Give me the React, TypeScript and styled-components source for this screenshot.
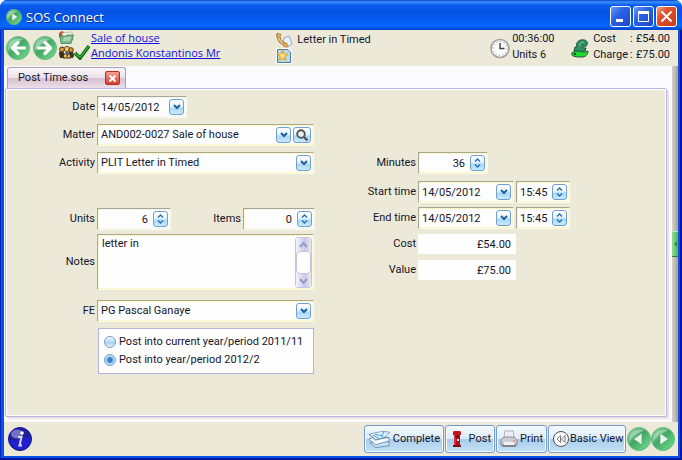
import React from 'react';
import styled, { createGlobalStyle, css } from 'styled-components';

const GlobalStyle = createGlobalStyle`
  * { box-sizing: border-box; }
  body { margin: 0; background: #ffffff; }
  button, input, select, textarea { font: inherit; color: inherit; margin: 0; }
  svg { display: block; flex: none; }
`;

const sand = '#ece9d8';
const face = css`
  background: linear-gradient(#ffffff 0%, #e4f2fd 45%, #a9d8f8 60%, #c9ebfd 100%);
  border: 1px solid #6f9fd0;
  border-radius: 3px;
`;

const Window = styled.div`
  display: flex;
  flex-direction: column;
  min-height: 100vh;
  padding: 0 2px 2px 3px;
  font: 11px/14px Roboto, 'Liberation Sans', sans-serif;
  color: #15152a;
  border: 2px solid #00189c;
  border-top: 0;
  border-left: 1px solid #0024c0;
  border-radius: 8px 8px 0 0;
  background: #0850e8;
`;

const TitleBar = styled.header`
  display: flex;
  align-items: center;
  height: 30px;
  margin: 0 -4px;
  padding: 3px 5px 0 6px;
  gap: 4px;
  border-radius: 7px 7px 0 0;
  background: linear-gradient(#0844c8 0, #3c92ff 2px, #0a5cf0 5px, #0453e4 12px, #0558ec 18px, #0668ff 26px, #0142c8 30px);
`;

const Title = styled.h1`
  flex: 1;
  margin: 0;
  font: 500 13px/18px 'Open Sans', 'Noto Sans', sans-serif;
  color: #ffffff;
  text-shadow: 1px 1px 0 #0a2a90;
`;

const CaptionButtons = styled.div`
  display: flex;
  gap: 2px;
`;

const CaptionButton = styled.button<{ $close?: boolean }>`
  display: grid;
  place-items: center;
  width: 21px;
  height: 21px;
  padding: 0;
  border: 1px solid #ffffff;
  border-radius: 3px;
  background: ${(p) =>
    p.$close
      ? 'linear-gradient(135deg, #f0a080, #e2502c 35%, #c83c14)'
      : 'linear-gradient(135deg, #6c98f4, #2a62e4 40%, #1c48cc)'};
`;

const Toolbar = styled.div`
  display: flex;
  align-items: center;
  height: 36px;
  padding: 0 8px 0 2px;
  background: ${sand};
`;

const RoundButton = styled.button`
  width: 24px;
  height: 24px;
  padding: 0;
  border: 0;
  border-radius: 50%;
  background: none;
`;

const NavButtons = styled.div`
  display: flex;
  gap: 3px;
`;

const Links = styled.div`
  display: grid;
  grid-template-columns: 33px auto;
  align-items: center;
  align-self: flex-start;
  margin-left: 1px;
  font: 11px/15px 'Open Sans', 'Noto Sans', sans-serif;
  white-space: nowrap;
`;

const Link = styled.a`
  color: #1111e0;
  text-decoration: underline;
`;

const Task = styled.div`
  flex: 1;
  display: grid;
  grid-template-columns: 16px auto;
  justify-content: start;
  column-gap: 5px;
  align-items: center;
  margin-left: 56px;
`;

const Figures = styled.div`
  display: grid;
  grid-template-columns: auto auto;
  gap: 2px 2px;
  align-items: center;
  width: 81px;
  justify-content: start;
`;

const Totals = styled.div`
  display: flex;
  align-items: center;
  gap: 4px;
`;

const TotalList = styled.dl`
  display: grid;
  grid-template-columns: auto 4px auto;
  gap: 2px 2px;
  margin: 0;
  padding-bottom: 2px;
`;

const Term = styled.dt``;
const Amount = styled.dd`
  margin: 0;
`;

const Lines = styled.div`
  display: grid;
  row-gap: 2px;
  padding-bottom: 2px;
`;

const Body = styled.div`
  flex: 1;
  display: flex;
  background: #fbfbfd;
`;

const Workspace = styled.main`
  flex: 1;
  display: flex;
  flex-direction: column;
  padding: 1px 5px 5px 1px;
`;

const Tab = styled.div`
  display: flex;
  align-items: center;
  justify-content: space-between;
  width: 119px;
  height: 21px;
  margin-left: 2px;
  padding: 0 5px 0 10px;
  border: 1px solid #b49cb4;
  border-bottom: 0;
  border-radius: 3px 3px 0 0;
  background: linear-gradient(#faf6fa 0, #ece0ea 48%, #d8c0d0 52%, #ecdfe8 100%);
`;

const TabLabel = styled.button`
  padding: 0;
  border: 0;
  background: none;
`;

const CloseTab = styled.button`
  display: grid;
  place-items: center;
  width: 15px;
  height: 14px;
  padding: 0;
  border: 1px solid #b03028;
  border-radius: 2px;
  background: linear-gradient(#f4a090, #d84030);
`;

const Panel = styled.form`
  flex: 1;
  display: flex;
  align-items: flex-start;
  padding-top: 7px;
  border: 1px solid #b4b8e0;
  border-radius: 2px;
  outline: 1px solid #ffffff;
  outline-offset: -2px;
  box-shadow: 2px 2px 1px #f0dce4;
  background: ${sand};
`;

const Column = styled.div<{ $labels: number; $top?: number }>`
  display: grid;
  grid-template-columns: ${(p) => p.$labels}px auto;
  column-gap: 2px;
  padding-top: ${(p) => p.$top ?? 0}px;
`;

const Row = styled.div<{ $gap?: number }>`
  display: grid;
  grid-column: 1 / -1;
  grid-template-columns: subgrid;
  align-items: center;
  justify-items: start;
  margin-bottom: ${(p) => p.$gap ?? 6}px;
`;

const Label = styled.label`
  justify-self: end;
  white-space: nowrap;
`;

const ItemsLabel = styled(Label)`
  width: 68px;
  text-align: right;
`;

const Group = styled.div`
  display: flex;
  align-items: center;
  gap: 2px;
`;

const well = css`
  background: #fefefe;
  border: 1px solid #fcfcf0;
  border-top-color: #a8a694;
  border-left-color: #a8a694;
  outline: 1px dotted #f0eeb4;
  outline-offset: -2px;
`;

const Field = styled.div<{ $width: number }>`
  ${well}
  position: relative;
  display: flex;
  align-items: center;
  gap: 2px;
  width: ${(p) => p.$width}px;
  height: 22px;
  padding: 0 2px 0 3px;
`;

const textBox = css`
  flex: 1;
  min-width: 0;
  height: 18px;
  padding: 0;
  border: 0;
  outline: 0;
  background: transparent;
`;

const Text = styled.input<{ $right?: boolean }>`
  ${textBox}
  text-align: ${(p) => (p.$right ? 'right' : 'left')};
  padding-right: ${(p) => (p.$right ? 3 : 0)}px;
`;

const Select = styled.select`
  ${textBox}
  appearance: none;
`;

const SmallButton = styled.button<{ $wide?: boolean }>`
  ${face}
  display: grid;
  place-items: center;
  width: ${(p) => (p.$wide ? 18 : 15)}px;
  height: 16px;
  padding: 0;
  flex: none;
`;

const SelectArrow = styled.span`
  ${face}
  display: grid;
  place-items: center;
  width: 15px;
  height: 16px;
  pointer-events: none;
`;

const NotesBox = styled.div`
  ${well}
  display: flex;
  width: 217px;
  height: 56px;
  padding: 2px 1px 1px 4px;
`;

const Notes = styled.textarea`
  flex: 1;
  min-width: 0;
  padding: 0;
  border: 0;
  outline: 0;
  resize: none;
  overflow: hidden;
  background: transparent;
`;

const ScrollTrack = styled.div`
  display: flex;
  flex-direction: column;
  width: 17px;
  border: 1px solid #c4c4e0;
  border-radius: 3px;
  background: #f0f0f8;
`;

const ScrollButton = styled.button`
  display: grid;
  place-items: center;
  height: 13px;
  padding: 0;
  border: 0;
  background: linear-gradient(90deg, #f4f4fa, #ccc8e4 60%, #ece8f4);
`;

const ScrollThumb = styled.div`
  flex: 1;
  border: 1px solid #c4c4e0;
  border-radius: 4px;
  background: #fdfdfd;
`;

const Choices = styled.fieldset`
  display: grid;
  row-gap: 4px;
  width: 216px;
  margin: 0 0 0 1px;
  padding: 6px 5px 6px;
  border: 1px solid #b4b4dc;
  background: #fefefe;
`;

const Choice = styled.label`
  display: flex;
  align-items: center;
  gap: 3px;
  white-space: nowrap;
`;

const Radio = styled.input`
  appearance: none;
  width: 12px;
  height: 12px;
  border: 1px solid #7c9cc8;
  border-radius: 50%;
  background: linear-gradient(#f4f8fc, #a8d4f4 60%, #e4f6ff);
  &:checked {
    background: radial-gradient(circle, #3c7cc0 0 2px, #78b4e8 3px, #d4ecfc 5px);
  }
`;

const Money = styled.output`
  width: 98px;
  height: 20px;
  padding: 4px 5px 0 0;
  text-align: right;
  line-height: 14px;
  background: #fefefe;
`;

const Splitter = styled.div`
  display: flex;
  align-items: center;
  width: 6px;
  background: linear-gradient(90deg, #d8d0cc, #a8a098);
`;

const SplitterGrip = styled.button`
  display: grid;
  place-items: center;
  width: 6px;
  height: 26px;
  padding: 0;
  border: 0;
  border-top: 1px solid #b0f0b0;
  border-bottom: 1px solid #2c7c3c;
  background: linear-gradient(90deg, #8ce08c, #58b068);
`;

const Footer = styled.footer`
  display: flex;
  align-items: center;
  justify-content: space-between;
  height: 34px;
  padding: 0 3px 0 4px;
  background: ${sand};
`;

const Actions = styled.div`
  display: flex;
  align-items: center;
  gap: 1px;
`;

const Action = styled.button<{ $width: number }>`
  display: flex;
  align-items: center;
  justify-content: space-between;
  width: ${(p) => p.$width}px;
  height: 28px;
  padding: 0 3px;
  border: 1px solid #7498d0;
  border-radius: 3px;
  box-shadow: inset 0 0 0 1px #f4faff;
  background: linear-gradient(#f4faff 0, #dcebf8 48%, #a8cdec 52%, #c4e2f6 100%);
  white-space: nowrap;
`;

const Pager = styled.div`
  display: flex;
`;

const Chevron = () => (
  <svg width="8" height="6" viewBox="0 0 8 6" aria-hidden="true">
    <path d="M1 1l3 3 3-3" fill="none" stroke="#20609c" strokeWidth="2" />
  </svg>
);

const UpDown = () => (
  <svg width="7" height="10" viewBox="0 0 7 10" aria-hidden="true">
    <path d="M1 3.5L3.5 1 6 3.5M1 6.5L3.5 9 6 6.5" fill="none" stroke="#2870a8" strokeWidth="1.4" />
  </svg>
);

const Orb = ({ kind, size = 24 }: { kind: 'back' | 'forward' | 'prev' | 'next'; size?: number }) => {
  const id = `orb-${kind}-${size}`;
  const flip = kind === 'back' || kind === 'prev';
  const solid = kind === 'prev' || kind === 'next';
  return (
    <svg width={size} height={size} viewBox="0 0 24 24" aria-hidden="true">
      <defs>
        <linearGradient id={id} x1="0" y1="0" x2="1" y2="1">
          <stop offset="0" stopColor="#a4dcb4" />
          <stop offset="0.45" stopColor="#42a864" />
          <stop offset="1" stopColor="#78e094" />
        </linearGradient>
      </defs>
      <circle cx="12" cy="12" r="11.5" fill={`url(#${id})`} stroke="#68bc80" />
      <path d="M2 15C2 5 8 2 18 3 12 5 6 9 2 15z" fill="#d4f0dc" opacity="0.45" />
      <g transform={flip ? 'translate(24 0) scale(-1 1)' : undefined}>
        {solid ? (
          <path d="M9 6l8.500 6L9 18z" fill="#e8f4e8" stroke="#4c9c60" strokeWidth="0.6" />
        ) : (
          <path d="M5.500 12H17M12 6.500l5.500 5.500-5.500 5.500" fill="none" stroke="#ffffff" strokeWidth="3.200" strokeLinecap="round" strokeLinejoin="round" />
        )}
      </g>
    </svg>
  );
};

const FolderIcon = () => (
  <svg width="17" height="15" viewBox="0 0 17 15" aria-hidden="true">
    <path d="M1 3l3-2 2 1v3l-5 3z" fill="#d44c30" />
    <path d="M4 3l10-1 1 8-10 1z" fill="#f4f4ec" stroke="#8ca890" strokeWidth="0.6" />
    <path d="M2 6l1 7.500h10l2.500-8.500H9L8 6z" fill="#78bc8c" stroke="#40805c" strokeWidth="0.8" />
    <path d="M5 10h7M6 8h7" stroke="#d4f0d8" />
  </svg>
);

const PeopleIcon = () => (
  <svg width="32" height="15" viewBox="0 0 32 15" aria-hidden="true">
    <path d="M1 9c0-4 4-4 5-1l1 5H2zM10 12l1-5c2-3 5 0 5 4l-1 2z" fill="#403018" />
    <circle cx="4" cy="4.500" r="2.500" fill="#d89c3c" stroke="#4c3418" />
    <circle cx="9" cy="4" r="2.700" fill="#f0c868" stroke="#705020" />
    <circle cx="13" cy="5" r="2.300" fill="#d89c3c" stroke="#4c3418" />
    <path d="M5 13c0-7 8-7 8 0z" fill="#ecb850" stroke="#302820" />
    <path d="M8 8l1 5 2-5z" fill="#3048a0" />
    <path d="M17 8l5 5L31 1" fill="none" stroke="#0c4c10" strokeWidth="3.400" />
    <path d="M17 8l5 4.500L31 1" fill="none" stroke="#24b030" strokeWidth="1.800" />
  </svg>
);

const PhoneIcon = () => (
  <svg width="17" height="16" viewBox="0 0 17 16" aria-hidden="true">
    <path d="M8 6l5-2 3 8-5 3-4-2z" fill="#e8f0fc" stroke="#7c94bc" strokeWidth="0.8" />
    <path d="M2 2c0 5 3 9 8 11" fill="none" stroke="#8c6424" strokeWidth="3.400" />
    <path d="M2 2c0 5 3 9 8 11" fill="none" stroke="#f0cc80" strokeWidth="2" />
    <path d="M1 1l4 1-1 4-3-1zM7 11l4 0 1 4-4 0z" fill="#e0ac54" stroke="#9c7030" strokeWidth="0.5" />
  </svg>
);

const StarIcon = () => (
  <svg width="16" height="16" viewBox="0 0 16 16" aria-hidden="true">
    <path d="M0 0h13l3 3v13H0z" fill="#ffffff" />
    <path d="M1.500 1.500h10.500l2.500 2.500v10.500h-13z" fill="#b4dcf0" stroke="#4c7ca4" />
    <path d="M6.500 2.500l1.400 3.300 3.600.3-2.700 2.300 1 3.800-3.300-2-3.300 2 1-3.800-2.700-2.300 3.600-.3z" fill="#ffe48c" stroke="#eca41c" strokeWidth="1.200" />
  </svg>
);

const ClockIcon = () => (
  <svg width="20" height="21" viewBox="0 0 20 21" aria-hidden="true">
    <circle cx="10" cy="10.500" r="9" fill="#fcfcfc" stroke="#a4a0a4" strokeWidth="1.600" />
    <circle cx="10" cy="10.500" r="7" fill="none" stroke="#78747c" strokeWidth="1" strokeDasharray="1 2.660" />
    <path d="M10 5v5.500h4.500" fill="none" stroke="#404048" strokeWidth="1.400" />
  </svg>
);

const PoundIcon = () => (
  <svg width="18" height="19" viewBox="0 0 18 19" aria-hidden="true">
    <path d="M6 8C4 3 9 0 13 1c3 0 4 3 3 5-1 2-3 2-4 0l0 3h3l-1 3h-3l-2 4-6-1 3-3H3l1-4z" fill="#2c9464" stroke="#205038" strokeWidth="1" />
    <path d="M9 7c-1-3 1-4 4-4" fill="none" stroke="#74c8a0" strokeWidth="1" />
    <path d="M3 13c4-3 7 2 14-1 0 4-3 6-6 6-3 0-9 0-10-2-1-2 0-3 2-3z" fill="#20dc30" stroke="#205038" strokeWidth="1" />
    <circle cx="4" cy="15" r="1.300" fill="#14501c" />
  </svg>
);

const SearchIcon = () => (
  <svg width="14" height="14" viewBox="0 0 14 14" aria-hidden="true">
    <circle cx="6" cy="6" r="3.800" fill="#e8f0f4" stroke="#545454" strokeWidth="1.900" />
    <path d="M9 9l3.500 3.500" stroke="#545454" strokeWidth="2.400" />
  </svg>
);

const InfoIcon = () => (
  <svg width="24" height="24" viewBox="0 0 24 24" aria-hidden="true">
    <circle cx="12" cy="12" r="11.500" fill="#2020cc" stroke="#141488" />
    <path d="M1.500 11C2 4 8 1 13 2c6 1 8 4 9 9-7-3-13 3-20 2z" fill="#20208c" />
    <ellipse cx="9" cy="7" rx="6" ry="4.500" fill="#9c9ce8" opacity="0.65" />
    <circle cx="14" cy="6" r="1.800" fill="#ffffff" />
    <path d="M10 10h3.500l-2 8.500h2.500" fill="none" stroke="#d8d8ff" strokeWidth="2" />
  </svg>
);

const PapersIcon = () => (
  <svg width="23" height="20" viewBox="0 0 24 20" aria-hidden="true">
    <path d="M2 14l7-2 13 1v4l-14 2z" fill="#cce0f0" stroke="#5480a8" strokeWidth="0.800" />
    <path d="M1 10l8-3 13 2v3l-14 4z" fill="#f4faff" stroke="#5480a8" strokeWidth="0.800" />
    <path d="M1 5l14-3 8 1-6 5-9 3z" fill="#e4f4ff" stroke="#6494bc" strokeWidth="0.800" />
    <path d="M7 5l9 2M5 6l6 3M17 2l-3 5" stroke="#3c98d4" strokeWidth="1" />
    <path d="M1 5l7 6 14-3" fill="none" stroke="#48789c" strokeWidth="0.800" />
  </svg>
);

const PostBoxIcon = () => (
  <svg width="16" height="18" viewBox="-3 0 16 18" aria-hidden="true">
    <path d="M1 2l1-1h6l1 1v3H1z" fill="#c41420" />
    <path d="M2 5h6v11H2z" fill="#ac0c1c" />
    <path d="M1 15h8v2H1z" fill="#7c0c18" />
    <path d="M2 5h2v10H2z" fill="#d42c38" />
    <path d="M3 6.500h4" stroke="#300408" />
    <path d="M5 9h2v2H5z" fill="#ffe8e8" />
  </svg>
);

const PrinterIcon = () => (
  <svg width="18" height="18" viewBox="0 0 18 18" aria-hidden="true">
    <path d="M4 8l1-7h8l1 7z" fill="#fcfcff" stroke="#9898a4" strokeWidth="0.800" />
    <path d="M1 10l3-3h10l3 3v5H1z" fill="#d0ccd4" stroke="#74707c" strokeWidth="0.800" />
    <path d="M2 15h14v2H2z" fill="#86828c" />
    <path d="M4 12h10v3H4z" fill="#f4f0f4" />
    <path d="M6 3h6M6 5h6" stroke="#d0d0dc" strokeWidth="0.800" />
    <circle cx="14" cy="11" r="0.800" fill="#d46444" />
  </svg>
);

const RewindIcon = () => (
  <svg width="18" height="18" viewBox="0 0 18 18" aria-hidden="true">
    <circle cx="9" cy="9" r="7.500" fill="#fcfcfc" stroke="#505058" />
    <path d="M8.500 5.500L5 9l3.500 3.500zM13 5.500L9.500 9l3.500 3.500z" fill="#ffffff" stroke="#686870" strokeWidth="0.900" />
  </svg>
);

const Dropdown = ({ id, width, value, children }: { id: string; width: number; value: string; children?: React.ReactNode }) => (
  <Field $width={width}>
    <Select id={id} defaultValue={value}>
      <option>{value}</option>
    </Select>
    <SelectArrow>
      <Chevron />
    </SelectArrow>
    {children}
  </Field>
);

const DateField = ({ id, width }: { id: string; width: number }) => (
  <Field $width={width}>
    <Text id={id} defaultValue="14/05/2012" />
    <SmallButton type="button" aria-label="Open calendar">
      <Chevron />
    </SmallButton>
  </Field>
);

const Spinner = ({ id, width, value, right, label }: { id: string; width: number; value: string; right?: boolean; label?: string }) => (
  <Field $width={width}>
    <Text id={id} defaultValue={value} $right={right} aria-label={label} />
    <SmallButton type="button" aria-label="Adjust value">
      <UpDown />
    </SmallButton>
  </Field>
);

export default function App() {
  return (
    <>
      <GlobalStyle />
      <Window>
        <TitleBar>
          <Orb kind="next" size={16} />
          <Title>SOS Connect</Title>
          <CaptionButtons>
            <CaptionButton aria-label="Minimize">
              <svg width="13" height="13" viewBox="0 0 13 13"><path d="M2 10.500h7" stroke="#fff" strokeWidth="3" /></svg>
            </CaptionButton>
            <CaptionButton aria-label="Maximize">
              <svg width="13" height="13" viewBox="0 0 13 13"><path d="M1.500 2v9.500h10V2" fill="none" stroke="#fff" strokeWidth="1" /><path d="M1 2.500h11" stroke="#fff" strokeWidth="3" /></svg>
            </CaptionButton>
            <CaptionButton $close aria-label="Close">
              <svg width="13" height="13" viewBox="0 0 13 13"><path d="M1.500 1.500l10 10M11.500 1.500l-10 10" stroke="#fff" strokeWidth="2" /></svg>
            </CaptionButton>
          </CaptionButtons>
        </TitleBar>

        <Toolbar>
          <NavButtons>
            <RoundButton aria-label="Back"><Orb kind="back" /></RoundButton>
            <RoundButton aria-label="Forward"><Orb kind="forward" /></RoundButton>
          </NavButtons>
          <Links>
            <FolderIcon />
            <Link href="#matter">Sale of house</Link>
            <PeopleIcon />
            <Link href="#client">Andonis Konstantinos Mr</Link>
          </Links>
          <Task>
            <PhoneIcon />
            <span>Letter in Timed</span>
            <StarIcon />
          </Task>
          <Figures>
            <ClockIcon />
            <Lines>
              <span>00:36:00</span>
              <span>Units 6</span>
            </Lines>
          </Figures>
          <Totals>
            <PoundIcon />
            <TotalList>
              <Term>Cost</Term><span>:</span><Amount>£54.00</Amount>
              <Term>Charge</Term><span>:</span><Amount>£75.00</Amount>
            </TotalList>
          </Totals>
        </Toolbar>

        <Body>
          <Workspace>
            <Tab>
              <TabLabel>Post Time.sos</TabLabel>
              <CloseTab aria-label="Close tab">
                <svg width="9" height="9" viewBox="0 0 9 9"><path d="M1.500 1.500l6 6M7.500 1.500l-6 6" stroke="#fff" strokeWidth="2" /></svg>
              </CloseTab>
            </Tab>
            <Panel onSubmit={(e) => e.preventDefault()}>
              <Column $labels={89}>
                <Row>
                  <Label htmlFor="date">Date</Label>
                  <DateField id="date" width={90} />
                </Row>
                <Row>
                  <Label htmlFor="matter">Matter</Label>
                  <Dropdown id="matter" width={217} value="AND002-0027 Sale of house">
                    <SmallButton type="button" $wide aria-label="Search matters">
                      <SearchIcon />
                    </SmallButton>
                  </Dropdown>
                </Row>
                <Row $gap={34}>
                  <Label htmlFor="activity">Activity</Label>
                  <Dropdown id="activity" width={217} value="PLIT Letter in Timed" />
                </Row>
                <Row $gap={4}>
                  <Label htmlFor="units">Units</Label>
                  <Group>
                    <Spinner id="units" width={74} value="6" right />
                    <ItemsLabel htmlFor="items">Items</ItemsLabel>
                    <Spinner id="items" width={72} value="0" right />
                  </Group>
                </Row>
                <Row $gap={10}>
                  <Label htmlFor="notes">Notes</Label>
                  <NotesBox>
                    <Notes id="notes" defaultValue="letter in" />
                    <ScrollTrack>
                      <ScrollButton type="button" aria-label="Scroll up">
                        <svg width="9" height="8" viewBox="0 0 9 8"><path d="M1 6l3.500-4L8 6" fill="none" stroke="#8c9ccc" strokeWidth="2" /></svg>
                      </ScrollButton>
                      <ScrollThumb />
                      <ScrollButton type="button" aria-label="Scroll down">
                        <svg width="9" height="8" viewBox="0 0 9 8"><path d="M1 2l3.500 4L8 2" fill="none" stroke="#8c9ccc" strokeWidth="2" /></svg>
                      </ScrollButton>
                    </ScrollTrack>
                  </NotesBox>
                </Row>
                <Row>
                  <Label htmlFor="fe">FE</Label>
                  <Dropdown id="fe" width={217} value="PG Pascal Ganaye" />
                </Row>
                <Row>
                  <span />
                  <Choices aria-label="Posting period">
                    <Choice><Radio type="radio" name="period" />Post into current year/period 2011/11</Choice>
                    <Choice><Radio type="radio" name="period" defaultChecked />Post into year/period 2012/2</Choice>
                  </Choices>
                </Row>
              </Column>

              <Column $labels={101} $top={56}>
                <Row $gap={7}>
                  <Label htmlFor="minutes">Minutes</Label>
                  <Spinner id="minutes" width={70} value="36" right />
                </Row>
                <Row $gap={4}>
                  <Label htmlFor="start">Start time</Label>
                  <Group>
                    <DateField id="start" width={96} />
                    <Spinner id="start-time" width={54} value="15:45" label="Start time of day" />
                  </Group>
                </Row>
                <Row $gap={5}>
                  <Label htmlFor="end">End time</Label>
                  <Group>
                    <DateField id="end" width={96} />
                    <Spinner id="end-time" width={54} value="15:45" label="End time of day" />
                  </Group>
                </Row>
                <Row>
                  <Label htmlFor="cost">Cost</Label>
                  <Money id="cost">£54.00</Money>
                </Row>
                <Row>
                  <Label htmlFor="value">Value</Label>
                  <Money id="value">£75.00</Money>
                </Row>
              </Column>
            </Panel>
          </Workspace>
          <Splitter>
            <SplitterGrip aria-label="Expand side panel">
              <svg width="5" height="8" viewBox="0 0 5 8"><path d="M4 1L1 4l3 3z" fill="#2c8c3c" /></svg>
            </SplitterGrip>
          </Splitter>
        </Body>

        <Footer>
          <RoundButton aria-label="Information"><InfoIcon /></RoundButton>
          <Actions>
            <Action $width={80}><PapersIcon />Complete</Action>
            <Action $width={50}><PostBoxIcon />Post</Action>
            <Action $width={51}><PrinterIcon />Print</Action>
            <Action $width={78}><RewindIcon />Basic View</Action>
            <Pager>
              <RoundButton aria-label="Previous"><Orb kind="prev" /></RoundButton>
              <RoundButton aria-label="Next"><Orb kind="next" /></RoundButton>
            </Pager>
          </Actions>
        </Footer>
      </Window>
    </>
  );
}
